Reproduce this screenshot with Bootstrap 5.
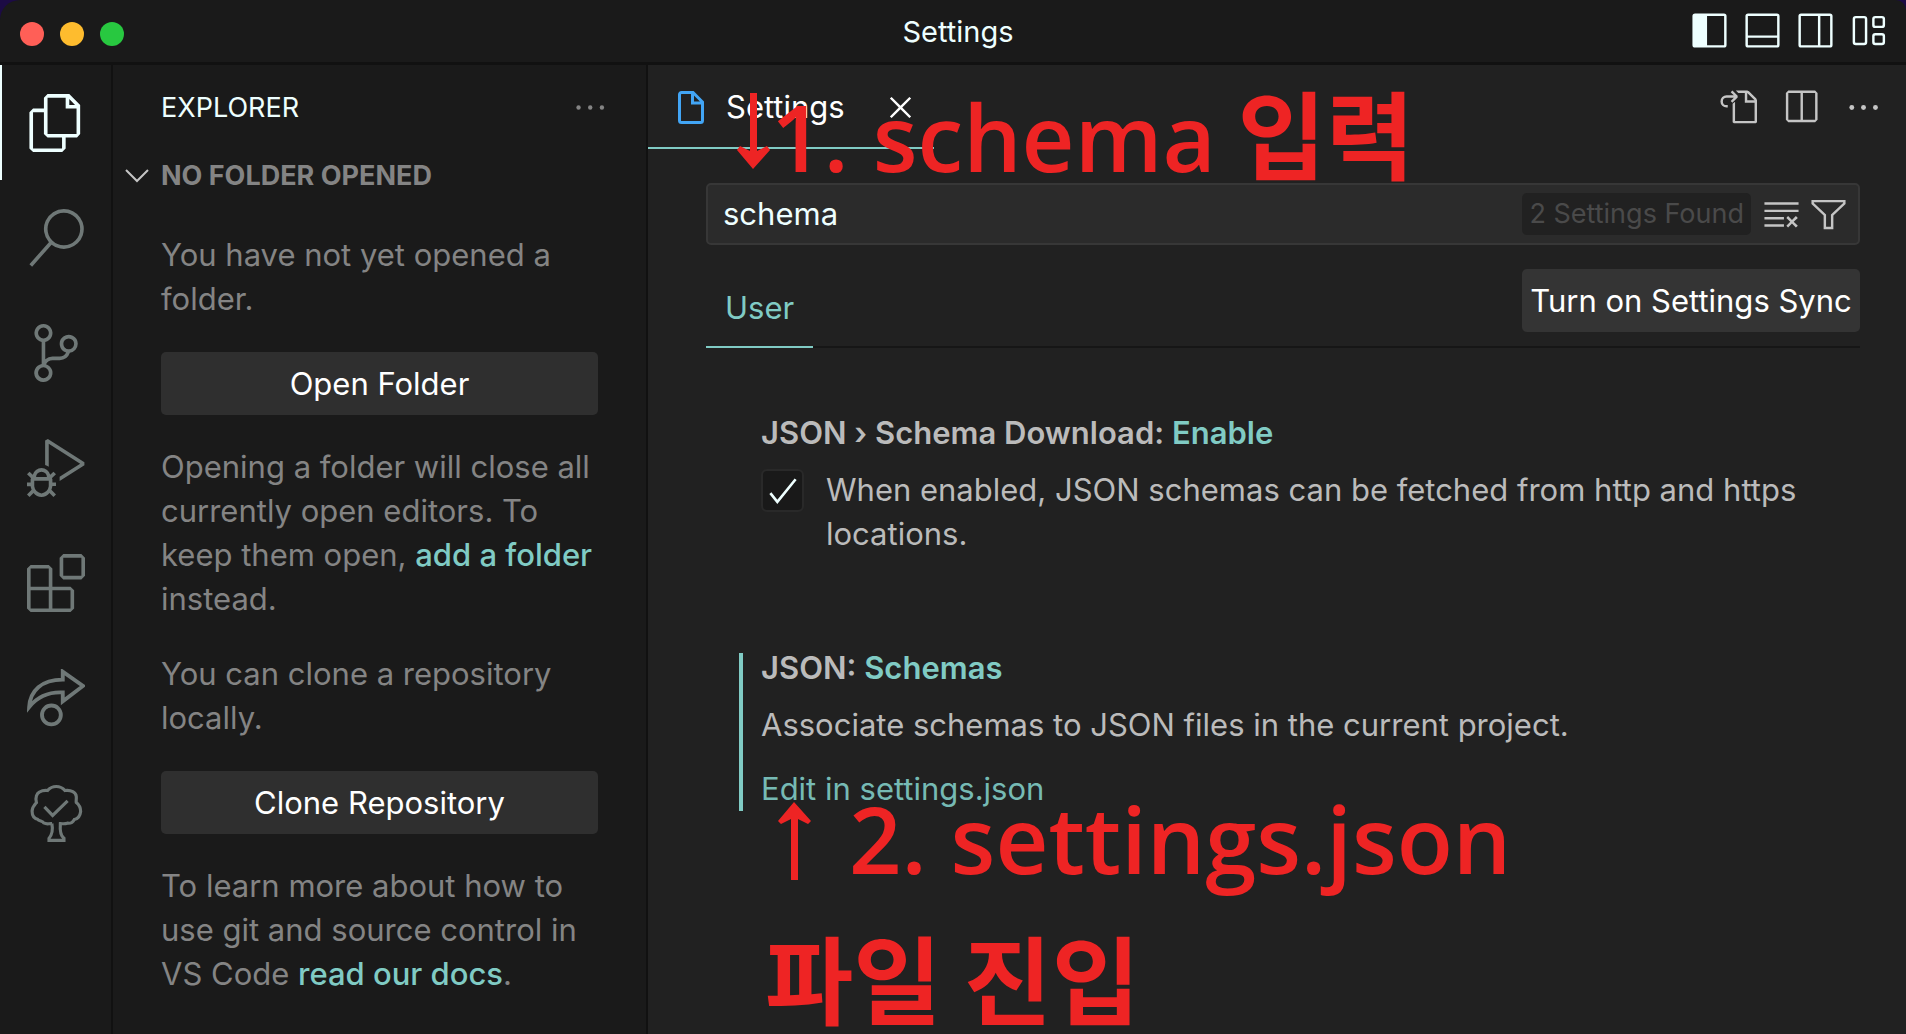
<!DOCTYPE html>
<html lang="en">
<head>
<meta charset="utf-8">
<meta name="viewport" content="width=device-width, initial-scale=1">
<title>Settings</title>
<link href="https://cdn.jsdelivr.net/npm/bootstrap@5.3.0/dist/css/bootstrap.min.css" rel="stylesheet">
<style>
:root { --side: #1a1a1a; --editor: #212121; --edge: #111111; --teal: #80cbc4; --bright: #eeffff; --muted: #848484; --soft: #bbbbbb; --icon: #c5c5c5; --red: #ee2424; }
body { background: #1c0b45; font-family: Inter, "Liberation Sans", sans-serif; font-size: 31px; line-height: 44px; color: var(--soft); }
svg { display: block; flex: none; fill: currentColor; }
.line-icon { fill: none; stroke: currentColor; }
button { font-family: inherit; }
.plain-btn { background: none; border: 0; padding: 0; color: inherit; display: block; }
a { color: var(--teal); text-decoration: none; }
.window-frame { min-height: 100vh; background: var(--side); border-radius: 20px 10px 0 0; overflow: hidden; }
.title-bar { height: 65px; border-bottom: 3px solid var(--edge); color: var(--bright); font-size: 29px; padding: 0 18px 2px 20px; }
.title-side { flex: 1 1 0; }
.light { width: 24px; height: 24px; border-radius: 50%; }
.light-red { background: #ff5f57; } .light-amber { background: #febc2e; } .light-green { background: #28c840; }
.activity-bar { width: 113px; border-right: 2px solid var(--edge); color: #6f7877; flex: none; }
.activity-item { height: 115px; padding-left: 25px; border-left: 2px solid transparent; text-align: left; }
.activity-item.active { color: var(--bright); border-color: var(--bright); }
.side-bar { width: 535px; border-right: 2px solid var(--edge); color: var(--muted); flex: none; }
.side-title { height: 84px; padding: 2px 37px 0 48px; font-size: 27px; color: var(--bright); }
.side-title button { color: var(--muted); }
.side-section { height: 53px; padding-left: 4px; font-size: 27px; font-weight: 700; color: var(--muted); }
.side-section svg { color: var(--icon); }
.side-body { padding: 31px 48px 0 48px; }
.side-body p { margin: 0 0 31px; }
.side-body a { font-weight: 500; }
.flat-btn { height: 63px; border: 0; border-radius: 5px; background: #2f2f2f; color: #fff; font-size: 31px; line-height: 44px; padding: 0; }
.side-body .flat-btn { margin-bottom: 30px; }
.editor-area { background: var(--editor); min-width: 0; }
.tab-strip { height: 84px; padding-right: 23px; }
.editor-tab { width: 286px; border-bottom: 2px solid var(--teal); color: #fff; padding: 2px 14px 0 28px; }
.editor-actions { color: var(--icon); }
.file-icon { color: #42a5f5; }
.settings-body { padding: 34px 46px 0 58px; }
.search-box { height: 62px; background: #2b2b2b; border: 2px solid #373737; border-radius: 5px; padding: 0 10px 0 0; }
.search-box input { background: none; border: 0; outline: 0; color: var(--bright); min-width: 0; padding: 0 0 0 15px; }
.search-box button { color: var(--icon); }
.count-badge { background: #212121; color: #4a4a4a; font-size: 27px; line-height: 42px; border-radius: 5px; padding: 0 7px; margin-right: 11px; }
.scope-bar { height: 79px; margin-top: 24px; border-bottom: 2px solid #161616; }
.scope-tab { height: 79px; color: var(--teal); padding: 0 19px; border-bottom: 2px solid var(--teal); }
.sync-btn { width: 338px; background: #343434; }
.setting-block { padding-left: 18px; border-left: 4px solid transparent; margin-left: 33px; }
.setting-block h2 { font-size: 31px; line-height: 30px; font-weight: 600; margin: 0 0 20px; }
.setting-block h2 span { color: var(--teal); }
.setting-block p { margin: 0 0 20px; }
.first-setting { margin-top: 70px; }
.second-setting { margin-top: 97px; border-color: var(--teal); }
.tick-box { width: 43px; height: 43px; appearance: none; background: #191919 url("data:image/svg+xml,%3Csvg xmlns='http://www.w3.org/2000/svg' viewBox='0 0 39 39'%3E%3Cpath d='M5 22l8 10L34 6' fill='none' stroke='%23eeffff' stroke-width='3'/%3E%3C/svg%3E") center / 34px no-repeat; border: 2px solid #292929; border-radius: 6px; flex: none; margin: 1px 22px 0 0; }
.edit-link { opacity: .9; display: block; }
.note { position: absolute; color: var(--red); font-family: "Noto Sans CJK KR", sans-serif; font-weight: 700; font-size: 96px; line-height: 137px; white-space: nowrap; pointer-events: none; }
.note span { font-family: "Open Sans", sans-serif; font-size: 92px; font-weight: 600; }
.note-one { left: 735px; top: 62px; }
.note-two { left: 765px; top: 764px; }
.note svg { display: inline-block; }
.note-one svg { vertical-align: 3px; }
.note-two svg { vertical-align: -6px; }
</style>
</head>
<body>
<div class="window-frame d-flex flex-column position-relative">
  <header class="title-bar d-flex align-items-center">
    <div class="title-side d-flex gap-3 pt-2">
      <span class="light light-red"></span><span class="light light-amber"></span><span class="light light-green"></span>
    </div>
    <div class="ps-2 pt-1">Settings</div>
    <div class="title-side d-flex justify-content-end" style="gap:14px">
      <button class="plain-btn" aria-label="Toggle side bar"><svg class="line-icon" width="39" height="39" viewBox="0 0 16 16"><rect x="1.5" y="1.5" width="13" height="13" rx=".6"/><path fill="currentColor" stroke="none" d="M1.5 1.5H7v13H1.500z"/></svg></button>
      <button class="plain-btn" aria-label="Toggle panel"><svg class="line-icon" width="39" height="39" viewBox="0 0 16 16"><rect x="1.500" y="1.500" width="13" height="13" rx=".6"/><path d="M1.500 10.500h13"/></svg></button>
      <button class="plain-btn" aria-label="Toggle secondary side bar"><svg class="line-icon" width="39" height="39" viewBox="0 0 16 16"><rect x="1.500" y="1.500" width="13" height="13" rx=".6"/><path d="M9.500 1.500v13"/></svg></button>
      <button class="plain-btn" aria-label="Customize layout"><svg class="line-icon" width="39" height="39" viewBox="0 0 16 16"><rect x="2" y="2.500" width="5" height="11" rx=".8"/><rect x="10" y="2.500" width="4.300" height="4" rx=".8"/><rect x="10" y="9.500" width="4.300" height="4" rx=".8"/></svg></button>
    </div>
  </header>
  <div class="d-flex flex-grow-1">
    <nav class="activity-bar d-flex flex-column" aria-label="Views">
      <button class="plain-btn activity-item active" aria-label="Explorer"><svg width="58" height="58" viewBox="0 0 24 24"><path d="M17.5 0h-9L7 1.5V6H2.5L1 7.5v15.070L2.500 24h12.070L16 22.570V18h4.700l1.300-1.430V4.500L17.500 0zm0 2.120l2.380 2.380H17.500V2.120zm-3 20.380h-12v-15H7v9.070L8.500 18h6v4.500zm6-6h-12v-15H16V6h4.500v10.500z"/></svg></button>
      <button class="plain-btn activity-item" aria-label="Search"><svg width="58" height="58" viewBox="0 0 24 24"><path d="M15.250 0a8.250 8.250 0 0 0-6.180 13.720L1 22.880l1.120 1 8.050-9.120A8.251 8.251 0 1 0 15.250.01V0zm0 15a6.750 6.750 0 1 1 0-13.500 6.750 6.750 0 0 1 0 13.500z"/></svg></button>
      <button class="plain-btn activity-item" aria-label="Source control"><svg width="58" height="58" viewBox="0 0 24 24"><path d="M21.007 8.222A3.738 3.738 0 0 0 15.045 5.200a3.737 3.737 0 0 0 1.156 6.583 2.988 2.988 0 0 1-2.668 1.670h-2.990a4.456 4.456 0 0 0-2.989 1.165V7.400a3.737 3.737 0 1 0-1.494 0v9.117a3.776 3.776 0 1 0 1.816.099 2.990 2.990 0 0 1 2.668-1.667h2.990a4.484 4.484 0 0 0 4.223-3.039 3.736 3.736 0 0 0 3.250-3.687zM4.565 3.738a2.242 2.242 0 1 1 4.484 0 2.242 2.242 0 0 1-4.484 0zm4.484 16.441a2.242 2.242 0 1 1-4.484 0 2.242 2.242 0 0 1 4.484 0zm8.221-9.715a2.242 2.242 0 1 1 0-4.485 2.242 2.242 0 0 1 0 4.485z"/></svg></button>
      <button class="plain-btn activity-item" aria-label="Run and debug"><svg width="58" height="58" viewBox="0 0 24 24"><path d="M10.940 13.500l-1.320 1.320a3.730 3.730 0 0 0-7.240 0L1.060 13.500 0 14.560l1.720 1.720-.22.22V18H0v1.500h1.500v.08c.077.489.214.966.41 1.420L0 22.940 1.060 24l1.650-1.650A4.308 4.308 0 0 0 6 24a4.310 4.310 0 0 0 3.290-1.650L10.940 24 12 22.940 10.090 21c.198-.464.336-.951.41-1.450v-.1H12V18h-1.500v-1.500l-.22-.22L12 14.560l-1.060-1.060zM6 13.500a2.250 2.250 0 0 1 2.250 2.250h-4.500A2.250 2.250 0 0 1 6 13.500zm3 6a3.330 3.330 0 0 1-3 3 3.330 3.330 0 0 1-3-3v-2.250h6v2.250zm14.760-9.900v1.260L13.500 17.370V15.600l8.500-5.370L9 2v9.460a5.070 5.070 0 0 0-1.500-.72V.63L8.640 0l15.120 9.600z"/></svg></button>
      <button class="plain-btn activity-item" aria-label="Extensions"><svg width="58" height="58" viewBox="0 0 24 24"><path d="M13.500 1.500L15 0h7.500L24 1.500V9l-1.500 1.500H15L13.500 9V1.500zm1.500 0V9h7.500V1.500H15zM0 15V6l1.500-1.500H9L10.500 6v7.500H18l1.500 1.500v7.500L18 24H1.500L0 22.500V15zm9-1.500V6H1.500v7.500H9zM9 15H1.500v7.500H9V15zm1.500 7.500H18V15h-7.500v7.500z"/></svg></button>
      <button class="plain-btn activity-item" aria-label="Live Share"><svg class="line-icon" width="58" height="58" viewBox="0 0 24 24" stroke-width="1.600"><path d="M.9 15.700C1.300 9 6 4.400 14.800 4.400V1.100L23.200 7l-8.400 6.400V9.700C9 9.400 4.500 11.300 .9 15.700z"/><circle cx="10.100" cy="19" r="3.900"/></svg></button>
      <button class="plain-btn activity-item" aria-label="Todo Tree"><svg class="line-icon" width="58" height="58" viewBox="0 0 24 24" stroke-width="1.300"><path d="M10.300 16.400C9 16.200 8.500 16.900 6.900 16.100C6.500 15.200 5 15.500 4.400 14.600C2.700 14.200 2.100 12.800 2.100 11.200C2.200 9.500 3.200 8.500 3.900 7.700C3.300 5.500 4.100 3.700 5.200 3.300C6.200 2.700 7.400 2.600 8.500 2.700C10.400 .5 13.800 .5 15.700 2.700C18.200 2.300 20.300 3.500 20.400 5.200C20.500 6.200 20.200 7.200 20.400 7.700C21.800 8.800 22.200 10 22.200 11.400C22 13 21.200 14.400 19.600 14.700C18.700 16.300 17.900 16.400 16.700 16.200C15.600 16.600 15 16.400 13.800 16.400C13.600 19 13.900 21.500 15.300 22.500V23.300H9.100V22.500C10.500 20.800 10.700 18.500 10.300 16.400M7.200 9.500L10.600 13L16.800 7"/></svg></button>
    </nav>
    <aside class="side-bar">
      <div class="side-title d-flex align-items-center justify-content-between">EXPLORER
        <button class="plain-btn" aria-label="More actions"><svg width="39" height="39" viewBox="0 0 16 16"><circle cx="3.500" cy="7.600" r=".9"/><circle cx="8.300" cy="7.600" r=".9"/><circle cx="13.100" cy="7.600" r=".9"/></svg></button>
      </div>
      <button class="plain-btn side-section d-flex align-items-center"><svg class="line-icon" width="44" height="39" viewBox="0 0 44 39" stroke-width="2"><path d="M9 14l11 11 11-11"/></svg>NO FOLDER OPENED</button>
      <div class="side-body">
        <p>You have not yet opened a folder.</p>
        <button class="flat-btn w-100">Open Folder</button>
        <p>Opening a folder will close all currently open editors. To keep them open, <a href="#">add a folder</a> instead.</p>
        <p>You can clone a repository locally.</p>
        <button class="flat-btn w-100">Clone Repository</button>
        <p>To learn more about how to use git and source control in VS Code <a href="#">read our docs</a>.</p>
      </div>
    </aside>
    <main class="editor-area flex-grow-1">
      <div class="tab-strip d-flex justify-content-between">
        <div class="editor-tab d-flex align-items-center">
          <svg class="line-icon file-icon" width="30" height="36" viewBox="0 0 30 36" stroke-width="3"><path d="M5.500 3.500H17L26.500 13V31.500a2 2 0 0 1-2 2h-19a2 2 0 0 1-2-2v-26a2 2 0 0 1 2-2zM16.500 4v10H26"/></svg>
          <span class="ms-3 me-auto ps-1">Settings</span>
          <button class="plain-btn" aria-label="Close tab"><svg width="39" height="39" viewBox="0 0 16 16"><path d="M8 8.707l3.646 3.647.708-.707L8.707 8l3.647-3.646-.707-.708L8 7.293 4.354 3.646l-.707.708L7.293 8l-3.646 3.646.707.708L8 8.707z"/></svg></button>
        </div>
        <div class="editor-actions d-flex align-items-center gap-4">
          <button class="plain-btn" aria-label="Open settings file"><svg width="39" height="39" viewBox="0 0 16 16"><path d="M6 5.914l2.060-2.060v-.708L5.915 1l-.707.707.043.043.25.25 1 1h-3a2.500 2.500 0 0 0 0 5H4V7h-.5a1.500 1.500 0 1 1 0-3h3L5.207 5.293 5.914 6 6 5.914zM11 2H8.328l-1-1H12l.71.29 3 3L16 5v9l-.5.5h-9L6 14V6.500l1-.847V13.500h8V6h-4V2zm1 0v3h3l-3-3z"/></svg></button>
          <button class="plain-btn" aria-label="Split editor"><svg width="39" height="39" viewBox="0 0 16 16"><path d="M14 1H3L2 2v11l1 1h11l1-1V2l-1-1zM8 13H3V2h5v11zm6 0H9V2h5v11z"/></svg></button>
          <button class="plain-btn" aria-label="More editor actions"><svg width="39" height="39" viewBox="0 0 16 16"><circle cx="3.200" cy="8" r="1"/><circle cx="8" cy="8" r="1"/><circle cx="12.900" cy="8" r="1"/></svg></button>
        </div>
      </div>
      <div class="settings-body">
        <div class="search-box d-flex align-items-center">
          <input class="flex-grow-1" type="text" value="schema" aria-label="Search settings">
          <span class="count-badge">2 Settings Found</span>
          <button class="plain-btn me-2" aria-label="Clear search"><svg width="39" height="39" viewBox="0 0 16 16"><path d="M10 12.600l.7.7 1.600-1.600 1.600 1.600.8-.7L13 11l1.700-1.600-.8-.8-1.600 1.700-1.600-1.700-.7.8 1.600 1.600-1.600 1.600zM1 4h14V3H1v1zm0 3h14V6H1v1zm8 2.500V9H1v1h8v-.5zM9 13v-1H1v1h8z"/></svg></button>
          <button class="plain-btn" aria-label="Filter settings"><svg width="39" height="39" viewBox="0 0 16 16"><path d="M15 2v1.670l-5 4.759V14H6V8.429l-5-4.760V2h14zM7 8v5h2V8l5-4.760V3H2v.24L7 8z"/></svg></button>
        </div>
        <div class="scope-bar d-flex justify-content-between">
          <button class="plain-btn scope-tab">User</button>
          <button class="flat-btn sync-btn">Turn on Settings Sync</button>
        </div>
        <section class="setting-block first-setting">
          <h2>JSON › Schema Download: <span>Enable</span></h2>
          <div class="d-flex">
            <input class="tick-box" type="checkbox" id="download" checked>
            <label for="download">When enabled, JSON schemas can be fetched from http and https locations.</label>
          </div>
        </section>
        <section class="setting-block second-setting">
          <h2>JSON: <span>Schemas</span></h2>
          <p>Associate schemas to JSON files in the current project.</p>
          <a class="edit-link" href="#">Edit in settings.json</a>
        </section>
      </div>
    </main>
  </div>
  <div class="note note-one"><svg width="36" height="76" viewBox="0 0 36 76" aria-hidden="true"><path d="M15 0h7v58l10-5 3 4-17 19L2 57l3-4 10 5z"/></svg><span>1. schema</span> 입력</div>
  <div class="note note-two"><svg width="60" height="78" viewBox="0 0 60 78" aria-hidden="true"><path d="M26 78h7V17l10 5 3-3L29 0 13 19l3 3 10-5z"/></svg><span> 2. settings.json</span><br>파일 진입</div>
</div>
<script src="https://cdn.jsdelivr.net/npm/bootstrap@5.3.0/dist/js/bootstrap.bundle.min.js"></script>
</body>
</html>
